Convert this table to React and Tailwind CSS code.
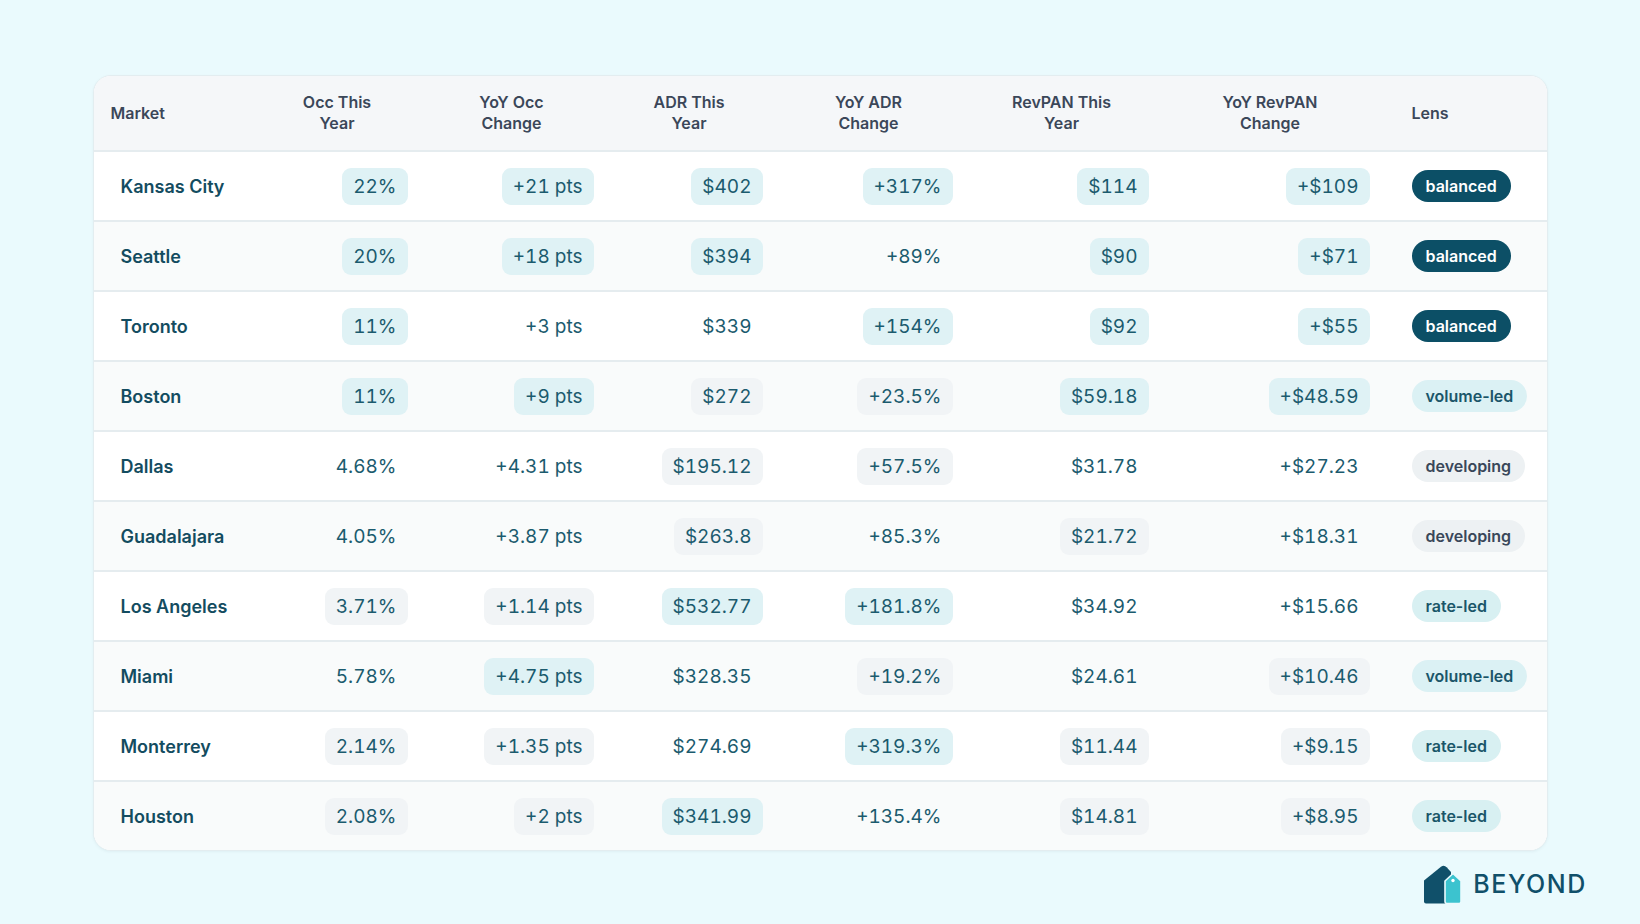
import React from "react";

const rows = [
    ["Kansas City", ["22%", "a"], ["+21 pts", "a"], ["$402", "a"], ["+317%", "a"], ["$114", "a"], ["+$109", "a"], "balanced"],
    ["Seattle", ["20%", "a"], ["+18 pts", "a"], ["$394", "a"], ["+89%", ""], ["$90", "a"], ["+$71", "a"], "balanced"],
    ["Toronto", ["11%", "a"], ["+3 pts", ""], ["$339", ""], ["+154%", "a"], ["$92", "a"], ["+$55", "a"], "balanced"],
    ["Boston", ["11%", "a"], ["+9 pts", "a"], ["$272", "g"], ["+23.5%", "g"], ["$59.18", "a"], ["+$48.59", "a"], "volume-led"],
    ["Dallas", ["4.68%", ""], ["+4.31 pts", ""], ["$195.12", "g"], ["+57.5%", "g"], ["$31.78", ""], ["+$27.23", ""], "developing"],
    ["Guadalajara", ["4.05%", ""], ["+3.87 pts", ""], ["$263.8", "g"], ["+85.3%", ""], ["$21.72", "g"], ["+$18.31", ""], "developing"],
    ["Los Angeles", ["3.71%", "g"], ["+1.14 pts", "g"], ["$532.77", "a"], ["+181.8%", "a"], ["$34.92", ""], ["+$15.66", ""], "rate-led"],
    ["Miami", ["5.78%", ""], ["+4.75 pts", "a"], ["$328.35", ""], ["+19.2%", "g"], ["$24.61", ""], ["+$10.46", "g"], "volume-led"],
    ["Monterrey", ["2.14%", "g"], ["+1.35 pts", "g"], ["$274.69", ""], ["+319.3%", "a"], ["$11.44", "g"], ["+$9.15", "g"], "rate-led"],
    ["Houston", ["2.08%", "g"], ["+2 pts", "g"], ["$341.99", "a"], ["+135.4%", ""], ["$14.81", "g"], ["+$8.95", "g"], "rate-led"],
];

const headers = [
    ["Occ This", "Year"],
    ["YoY Occ", "Change"],
    ["ADR This", "Year"],
    ["YoY ADR", "Change"],
    ["RevPAN This", "Year"],
    ["YoY RevPAN", "Change"],
];

const pillBg = {
    a: "bg-[#dff2f5]",
    g: "bg-[#f1f4f6]",
    "": "bg-transparent",
};

const lensStyle = {
    balanced: "bg-[#0c4f66] text-white",
    "volume-led": "bg-[#dbf1f4] text-[#1a5669]",
    developing: "bg-[#edf1f3] text-[#394759]",
    "rate-led": "bg-[#d8f0f2] text-[#1a5669]",
};

const cols = "grid grid-cols-[162px_163px_186px_169px_190px_196px_221px_1fr]";

const Logo = () => (
    <div className="flex items-center gap-[11px]">
        <svg width="38" height="39" viewBox="0 0 38 39">
            <path d="M2 38.5 Q0 38.5 0 36.5 L0 15.5 L17 1.8 Q20 -0.6 22.6 2.2 L27 7 L27 38.5 Z" fill="#10506a" />
            <path
                d="M21 16 L29 8.5 L37 16 L37 36.5 Q37 38.5 35 38.5 L23 38.5 Q21 38.5 21 36.5 Z"
                fill="#3cc3cf"
                stroke="#eafafd"
                strokeWidth="1.6"
                strokeLinejoin="round"
            />
            <circle cx="29" cy="15.5" r="1.7" fill="#ffffff" />
        </svg>
        <span className="text-[25px] font-medium tracking-[1.6px] text-[#10506a] leading-none">BEYOND</span>
    </div>
);

const Cell = ({ value, kind }) => (
    <div className="flex justify-end pr-[11px]">
        <span className={`rounded-[9px] px-[11px] py-[7px] text-[19px] leading-[23px] tabular-nums text-[#1b5b6e] ${pillBg[kind]}`}>
            {value}
        </span>
    </div>
);

export default function App() {
    return (
        <div
            className="min-h-screen w-full bg-[#eafafd] pt-[75px]"
            style={{ fontFamily: "Inter, 'Noto Sans', sans-serif" }}
        >
            <div className="mx-auto w-[1455px] overflow-hidden rounded-[18px] border border-[#e3edf0] bg-white shadow-[0_1px_3px_rgba(15,60,80,0.05)]">
                <div className={`${cols} h-[74px] items-center bg-[#f5f7f9] text-[16px] font-semibold leading-[21px] text-[#3b4759]`}>
                    <div className="pl-[17px]">Market</div>
                    {headers.map((h, i) => (
                        <div key={i} className="text-center">
                            {h[0]}
                            <br />
                            {h[1]}
                        </div>
                    ))}
                    <div className="pl-[31px]">Lens</div>
                </div>
                {rows.map((r, i) => (
                    <div
                        key={r[0]}
                        className={`${cols} h-[70px] items-center border-t-2 border-[#e5ecef] ${i % 2 === 1 ? "bg-[#f9fbfb]" : "bg-white"}`}
                    >
                        <div className="pl-[27px] text-[18px] font-semibold text-[#134c60]">{r[0]}</div>
                        {r.slice(1, 7).map((c, j) => (
                            <Cell key={j} value={c[0]} kind={c[1]} />
                        ))}
                        <div className="pl-[31px]">
                            <span className={`inline-block rounded-full px-[14px] py-[5px] text-[16px] font-semibold leading-[22px] ${lensStyle[r[7]]}`}>
                                {r[7]}
                            </span>
                        </div>
                    </div>
                ))}
            </div>
            <div className="flex justify-end pr-[53px] pt-[14px]">
                <Logo />
            </div>
        </div>
    );
}
